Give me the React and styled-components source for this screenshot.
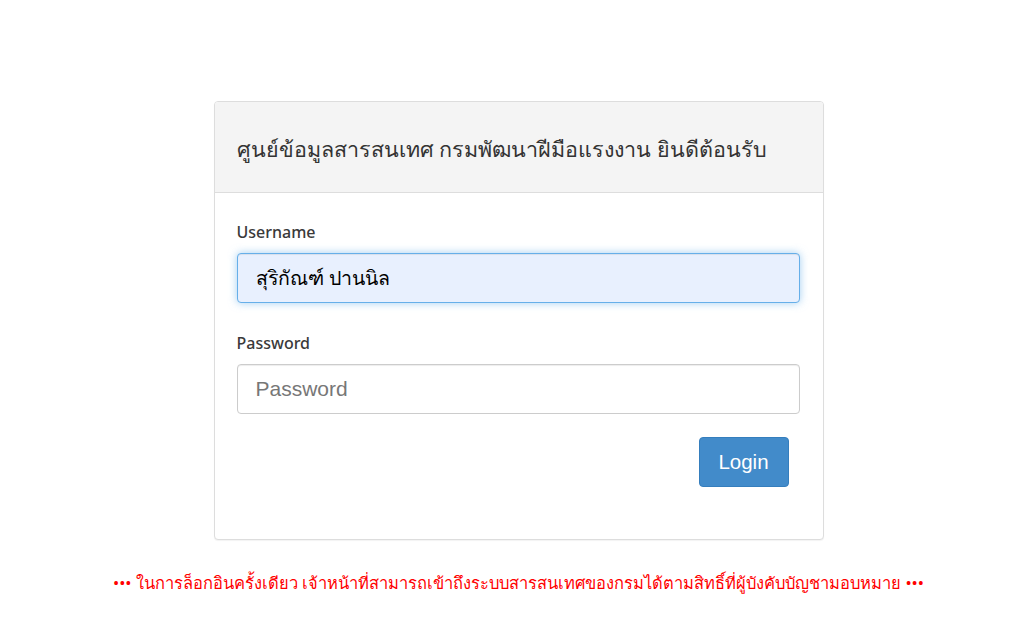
import React, { useState } from "react";
import styled, { createGlobalStyle } from "styled-components";

const GlobalStyle = createGlobalStyle`
  html, body {
    margin: 0;
    padding: 0;
    background: #ffffff;
    font-family: "Noto Sans", "Liberation Sans", sans-serif;
    color: #333;
  }
  * { box-sizing: border-box; }
`;

export default function App() {
  const [username, setUsername] = useState("สุริกัณฑ์ ปานนิล");
  const [password, setPassword] = useState("");

  return (
    <>
      <GlobalStyle />
      <Page>
        <Card>
          <CardHeader>
            <Title>ศูนย์ข้อมูลสารสนเทศ กรมพัฒนาฝีมือแรงงาน ยินดีต้อนรับ</Title>
          </CardHeader>
          <CardBody>
            <Field $space={30}>
              <Label>Username</Label>
              <Input
                $focused
                value={username}
                onChange={(e) => setUsername(e.target.value)}
                type="text"
              />
            </Field>
            <Field $space={23}>
              <Label>Password</Label>
              <Input
                value={password}
                onChange={(e) => setPassword(e.target.value)}
                type="password"
                placeholder="Password"
              />
            </Field>
            <Actions>
              <LoginButton>Login</LoginButton>
            </Actions>
          </CardBody>
        </Card>
        <Notice>
          ••• ในการล็อกอินครั้งเดียว เจ้าหน้าที่สามารถเข้าถึงระบบสารสนเทศของกรมได้ตามสิทธิ์ที่ผู้บังคับบัญชามอบหมาย •••
        </Notice>
      </Page>
    </>
  );
}

const Page = styled.div`
  width: 100%;
  display: flex;
  flex-direction: column;
  align-items: center;
  padding: 101px 0 0 16px;
`;

const Card = styled.div`
  width: 610px;
  border: 1px solid #dddddd;
  border-radius: 4px;
  background: #fff;
  box-shadow: 0 1px 1px rgba(0, 0, 0, 0.05);
`;

const CardHeader = styled.div`
  height: 91px;
  background: #f4f4f4;
  border-bottom: 1px solid #dddddd;
  border-radius: 3px 3px 0 0;
  display: flex;
  align-items: center;
  padding: 4px 22px 0 22px;
`;

const Title = styled.h3`
  margin: 0;
  font-size: 21.5px;
  font-weight: 400;
  color: #333;
  white-space: nowrap;
`;

const CardBody = styled.div`
  padding: 29px 22px 52px 22px;
`;

const Field = styled.div`
  display: flex;
  flex-direction: column;
  margin-bottom: ${(p) => p.$space}px;
`;

const Label = styled.label`
  font-size: 16px;
  font-weight: 500;
  color: #3a3a3a;
  margin-bottom: 11px;
  line-height: 20px;
`;

const Input = styled.input`
  width: 563px;
  height: 50px;
  padding: 0 18px;
  font-size: ${(p) => (p.$focused ? "19.5px" : "21px")};
  font-family: "Liberation Sans", "Noto Sans", sans-serif;
  border-radius: 4px;
  outline: none;
  color: ${(p) => (p.$focused ? "#000" : "#555")};
  background: ${(p) => (p.$focused ? "#e8f0fe" : "#fff")};
  border: 1px solid ${(p) => (p.$focused ? "#66afe9" : "#cccccc")};
  box-shadow: ${(p) =>
    p.$focused
      ? "inset 0 1px 1px rgba(0,0,0,.075), 0 0 8px rgba(102,175,233,.6)"
      : "inset 0 1px 1px rgba(0,0,0,.075)"};
  &::placeholder {
    color: #777;
  }
`;

const Actions = styled.div`
  display: flex;
  justify-content: flex-end;
  padding-right: 12px;
`;

const LoginButton = styled.button`
  width: 90px;
  height: 50px;
  background: #428bca;
  border: 1px solid #357ebd;
  border-radius: 4px;
  color: #fff;
  font-size: 20.5px;
  font-family: "Liberation Sans", sans-serif;
  cursor: pointer;
`;

const Notice = styled.p`
  margin: 31px 0 0 0;
  color: #ff0000;
  font-size: 16.5px;
  line-height: 24px;
  text-align: center;
`;
